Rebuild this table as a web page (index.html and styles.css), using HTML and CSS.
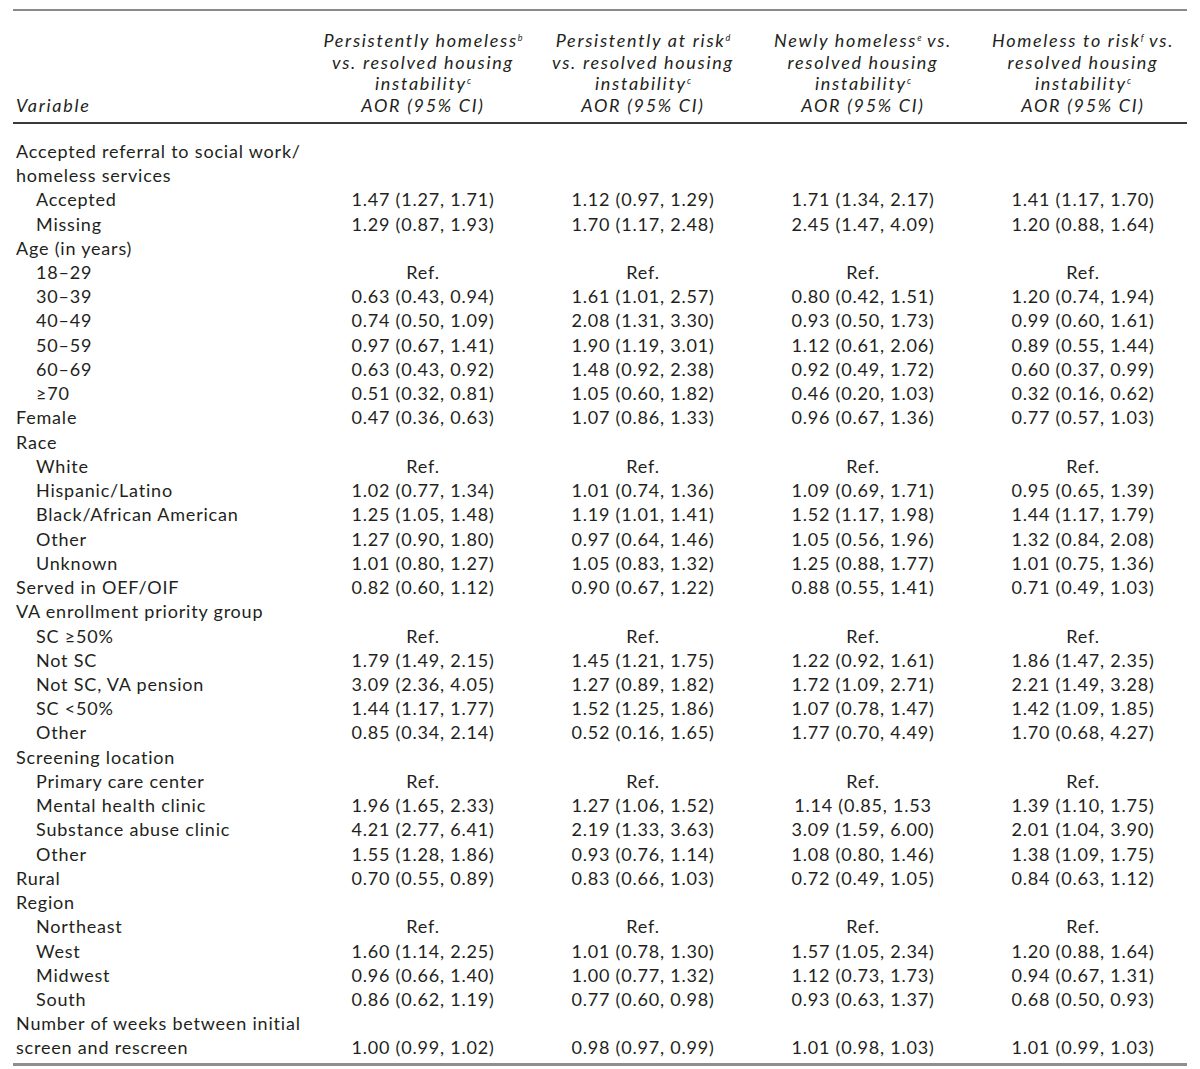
FILE: index.html
```html
<!DOCTYPE html>
<html lang="en">
<head>
<meta charset="utf-8">
<title>AOR table</title>
<link rel="stylesheet" href="styles.css">
</head>
<body>
<div class="wrap">
<table class="aor">
  <colgroup>
    <col class="c-var"><col class="c-d"><col class="c-d"><col class="c-d"><col class="c-last">
  </colgroup>
  <thead>
    <tr>
      <th class="h-var">Variable</th>
      <th>Persistently homeless<sup>b</sup><br>vs. resolved housing<br>instability<sup>c</sup><br>AOR (95% CI)</th>
      <th>Persistently at risk<sup>d</sup><br>vs. resolved housing<br>instability<sup>c</sup><br>AOR (95% CI)</th>
      <th>Newly homeless<sup>e</sup> vs.<br>resolved housing<br>instability<sup>c</sup><br>AOR (95% CI)</th>
      <th class="last">Homeless to risk<sup>f</sup> vs.<br>resolved housing<br>instability<sup>c</sup><br>AOR (95% CI)</th>
    </tr>
  </thead>
  <tbody>
    <tr class="first"><td>Accepted referral to social work/</td><td></td><td></td><td></td><td class="last"></td></tr>
    <tr><td>homeless services</td><td></td><td></td><td></td><td class="last"></td></tr>
    <tr><td class="ind">Accepted</td><td>1.47 (1.27, 1.71)</td><td>1.12 (0.97, 1.29)</td><td>1.71 (1.34, 2.17)</td><td class="last">1.41 (1.17, 1.70)</td></tr>
    <tr><td class="ind">Missing</td><td>1.29 (0.87, 1.93)</td><td>1.70 (1.17, 2.48)</td><td>2.45 (1.47, 4.09)</td><td class="last">1.20 (0.88, 1.64)</td></tr>
    <tr><td>Age (in years)</td><td></td><td></td><td></td><td class="last"></td></tr>
    <tr><td class="ind">18–29</td><td>Ref.</td><td>Ref.</td><td>Ref.</td><td class="last">Ref.</td></tr>
    <tr><td class="ind">30–39</td><td>0.63 (0.43, 0.94)</td><td>1.61 (1.01, 2.57)</td><td>0.80 (0.42, 1.51)</td><td class="last">1.20 (0.74, 1.94)</td></tr>
    <tr><td class="ind">40–49</td><td>0.74 (0.50, 1.09)</td><td>2.08 (1.31, 3.30)</td><td>0.93 (0.50, 1.73)</td><td class="last">0.99 (0.60, 1.61)</td></tr>
    <tr><td class="ind">50–59</td><td>0.97 (0.67, 1.41)</td><td>1.90 (1.19, 3.01)</td><td>1.12 (0.61, 2.06)</td><td class="last">0.89 (0.55, 1.44)</td></tr>
    <tr><td class="ind">60–69</td><td>0.63 (0.43, 0.92)</td><td>1.48 (0.92, 2.38)</td><td>0.92 (0.49, 1.72)</td><td class="last">0.60 (0.37, 0.99)</td></tr>
    <tr><td class="ind">≥70</td><td>0.51 (0.32, 0.81)</td><td>1.05 (0.60, 1.82)</td><td>0.46 (0.20, 1.03)</td><td class="last">0.32 (0.16, 0.62)</td></tr>
    <tr><td>Female</td><td>0.47 (0.36, 0.63)</td><td>1.07 (0.86, 1.33)</td><td>0.96 (0.67, 1.36)</td><td class="last">0.77 (0.57, 1.03)</td></tr>
    <tr><td>Race</td><td></td><td></td><td></td><td class="last"></td></tr>
    <tr><td class="ind">White</td><td>Ref.</td><td>Ref.</td><td>Ref.</td><td class="last">Ref.</td></tr>
    <tr><td class="ind">Hispanic/Latino</td><td>1.02 (0.77, 1.34)</td><td>1.01 (0.74, 1.36)</td><td>1.09 (0.69, 1.71)</td><td class="last">0.95 (0.65, 1.39)</td></tr>
    <tr><td class="ind">Black/African American</td><td>1.25 (1.05, 1.48)</td><td>1.19 (1.01, 1.41)</td><td>1.52 (1.17, 1.98)</td><td class="last">1.44 (1.17, 1.79)</td></tr>
    <tr><td class="ind">Other</td><td>1.27 (0.90, 1.80)</td><td>0.97 (0.64, 1.46)</td><td>1.05 (0.56, 1.96)</td><td class="last">1.32 (0.84, 2.08)</td></tr>
    <tr><td class="ind">Unknown</td><td>1.01 (0.80, 1.27)</td><td>1.05 (0.83, 1.32)</td><td>1.25 (0.88, 1.77)</td><td class="last">1.01 (0.75, 1.36)</td></tr>
    <tr><td>Served in OEF/OIF</td><td>0.82 (0.60, 1.12)</td><td>0.90 (0.67, 1.22)</td><td>0.88 (0.55, 1.41)</td><td class="last">0.71 (0.49, 1.03)</td></tr>
    <tr><td>VA enrollment priority group</td><td></td><td></td><td></td><td class="last"></td></tr>
    <tr><td class="ind">SC ≥50%</td><td>Ref.</td><td>Ref.</td><td>Ref.</td><td class="last">Ref.</td></tr>
    <tr><td class="ind">Not SC</td><td>1.79 (1.49, 2.15)</td><td>1.45 (1.21, 1.75)</td><td>1.22 (0.92, 1.61)</td><td class="last">1.86 (1.47, 2.35)</td></tr>
    <tr><td class="ind">Not SC, VA pension</td><td>3.09 (2.36, 4.05)</td><td>1.27 (0.89, 1.82)</td><td>1.72 (1.09, 2.71)</td><td class="last">2.21 (1.49, 3.28)</td></tr>
    <tr><td class="ind">SC &lt;50%</td><td>1.44 (1.17, 1.77)</td><td>1.52 (1.25, 1.86)</td><td>1.07 (0.78, 1.47)</td><td class="last">1.42 (1.09, 1.85)</td></tr>
    <tr><td class="ind">Other</td><td>0.85 (0.34, 2.14)</td><td>0.52 (0.16, 1.65)</td><td>1.77 (0.70, 4.49)</td><td class="last">1.70 (0.68, 4.27)</td></tr>
    <tr><td>Screening location</td><td></td><td></td><td></td><td class="last"></td></tr>
    <tr><td class="ind">Primary care center</td><td>Ref.</td><td>Ref.</td><td>Ref.</td><td class="last">Ref.</td></tr>
    <tr><td class="ind">Mental health clinic</td><td>1.96 (1.65, 2.33)</td><td>1.27 (1.06, 1.52)</td><td>1.14 (0.85, 1.53</td><td class="last">1.39 (1.10, 1.75)</td></tr>
    <tr><td class="ind">Substance abuse clinic</td><td>4.21 (2.77, 6.41)</td><td>2.19 (1.33, 3.63)</td><td>3.09 (1.59, 6.00)</td><td class="last">2.01 (1.04, 3.90)</td></tr>
    <tr><td class="ind">Other</td><td>1.55 (1.28, 1.86)</td><td>0.93 (0.76, 1.14)</td><td>1.08 (0.80, 1.46)</td><td class="last">1.38 (1.09, 1.75)</td></tr>
    <tr><td>Rural</td><td>0.70 (0.55, 0.89)</td><td>0.83 (0.66, 1.03)</td><td>0.72 (0.49, 1.05)</td><td class="last">0.84 (0.63, 1.12)</td></tr>
    <tr><td>Region</td><td></td><td></td><td></td><td class="last"></td></tr>
    <tr><td class="ind">Northeast</td><td>Ref.</td><td>Ref.</td><td>Ref.</td><td class="last">Ref.</td></tr>
    <tr><td class="ind">West</td><td>1.60 (1.14, 2.25)</td><td>1.01 (0.78, 1.30)</td><td>1.57 (1.05, 2.34)</td><td class="last">1.20 (0.88, 1.64)</td></tr>
    <tr><td class="ind">Midwest</td><td>0.96 (0.66, 1.40)</td><td>1.00 (0.77, 1.32)</td><td>1.12 (0.73, 1.73)</td><td class="last">0.94 (0.67, 1.31)</td></tr>
    <tr><td class="ind">South</td><td>0.86 (0.62, 1.19)</td><td>0.77 (0.60, 0.98)</td><td>0.93 (0.63, 1.37)</td><td class="last">0.68 (0.50, 0.93)</td></tr>
    <tr><td>Number of weeks between initial</td><td></td><td></td><td></td><td class="last"></td></tr>
    <tr class="lastrow"><td>screen and rescreen</td><td>1.00 (0.99, 1.02)</td><td>0.98 (0.97, 0.99)</td><td>1.01 (0.98, 1.03)</td><td class="last">1.01 (0.99, 1.03)</td></tr>
  </tbody>
</table>
</div>
</body>
</html>
```
FILE: styles.css
```css
html, body {
  margin: 0;
  padding: 0;
  background: #ffffff;
}

.wrap {
  padding: 9px 13px 0 13px;
}

.aor {
  width: 1174px;
  table-layout: fixed;
  border-collapse: collapse;
  font-family: Lato, "Open Sans", "Liberation Sans", sans-serif;
  font-size: 18px;
  letter-spacing: 0.8px;
  color: #231f20;
  border-top: 2px solid #8a8a8a;
  border-bottom: 3px solid #8f8f8f;
}

.c-var { width: 300px; }
.c-d { width: 220px; }
.c-last { width: 214px; }

.aor thead th {
  font-weight: normal;
  font-style: italic;
  text-align: center;
  vertical-align: bottom;
  line-height: 21.7px;
  letter-spacing: 1.7px;
  padding: 19px 0 5px 0;
  border-bottom: 2px solid #3a3a3a;
  white-space: nowrap;
}

.aor thead th.h-var {
  text-align: left;
  padding-left: 3px;
}

.aor thead th.last {
  padding-left: 6px;
}

.aor sup {
  font-size: 9px;
  line-height: 0;
  letter-spacing: 0;
  vertical-align: 6px;
  font-style: italic;
}

.aor tbody td {
  height: 24.24px;
  line-height: 24.24px;
  padding: 0;
  text-align: center;
  white-space: nowrap;
}

.aor tbody td:first-child {
  text-align: left;
  padding-left: 3px;
}

.aor tbody td.ind {
  padding-left: 23px;
}

.aor tbody td.last {
  padding-left: 6px;
}

.aor tbody tr.first td {
  padding-top: 15px;
}

.aor tbody tr.lastrow td {
  padding-bottom: 3px;
}
```
